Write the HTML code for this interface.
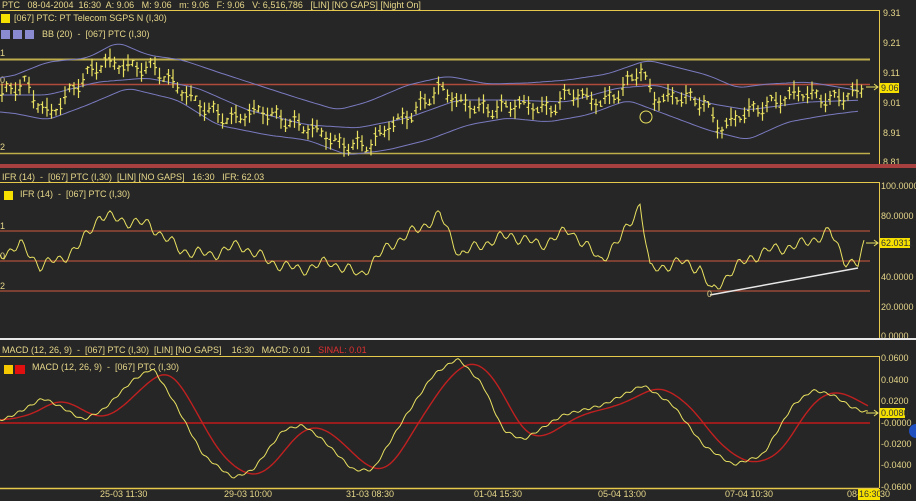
<!DOCTYPE html>
<html><head><meta charset="utf-8"><style>
html,body{margin:0;padding:0;background:#262626;width:916px;height:501px;overflow:hidden}
svg{display:block}
text{font-family:"Liberation Sans",sans-serif;font-size:9px;fill:#e6d78a;white-space:pre}
text.d{fill:#333}
</style></head><body>
<svg id="s" width="916" height="501" viewBox="0 0 916 501" xml:space="preserve">
<rect width="916" height="501" fill="#262626"/>
<text x="2" y="8">PTC   08-04-2004  16:30  A: 9.06   M: 9.06   m: 9.06   F: 9.06   V: 6,516,786   [LIN] [NO GAPS] [Night On]</text>
<line x1="0" y1="10.5" x2="879" y2="10.5" stroke="#e6c84a"/>
<line x1="879.5" y1="10" x2="879.5" y2="164" stroke="#e6c84a"/>
<rect x="1" y="14" width="9" height="9" fill="#f5e000"/>
<text x="14" y="21">[067] PTC: PT Telecom SGPS N (I,30)</text>
<rect x="1" y="30" width="9" height="9" fill="#8a8ad0"/><rect x="13" y="30" width="9" height="9" fill="#8a8ad0"/><rect x="25" y="30" width="9" height="9" fill="#8a8ad0"/>
<text x="42" y="37">BB (20)  -  [067] PTC (I,30)</text>
<text x="0" y="56">1</text><text x="0" y="150">2</text><text x="0" y="83">0</text>
<line x1="0" y1="59.5" x2="870" y2="59.5" stroke="#bfae4a" stroke-width="2"/>
<line x1="0" y1="153.5" x2="870" y2="153.5" stroke="#bfae4a" stroke-width="1.5"/>
<line x1="0" y1="84.5" x2="870" y2="84.5" stroke="#b04a3a" stroke-width="1.5"/>
<g id="bb" fill="none" stroke="#7a7ac0" stroke-width="1"></g>
<g id="bars" stroke="#e8e060" stroke-width="1.2" fill="none"></g>
<circle cx="646" cy="117" r="6" fill="none" stroke="#e8e060"/>
<g>
<text x="883" y="16">9.31</text><text x="883" y="46">9.21</text><text x="883" y="76">9.11</text>
<rect x="880" y="83" width="19" height="10" fill="#f5e000"/><text x="881" y="91" class="d">9.06</text>
<text x="883" y="106">9.01</text><text x="883" y="136">8.91</text><text x="883" y="165">8.81</text>
</g>
<path d="M866 87 L878 87 M874 84 L878 87 L874 90" stroke="#e8e060" fill="none"/>
<rect x="0" y="164" width="916" height="4" fill="#a84040"/>

<text x="2" y="180">IFR (14)  -  [067] PTC (I,30)  [LIN] [NO GAPS]   16:30   IFR: 62.03</text>
<line x1="0" y1="182.5" x2="879" y2="182.5" stroke="#e6c84a"/>
<line x1="879.5" y1="182" x2="879.5" y2="338" stroke="#e6c84a"/>
<rect x="4" y="191" width="9" height="9" fill="#f5e000"/>
<text x="20" y="197">IFR (14)  -  [067] PTC (I,30)</text>
<text x="0" y="229">1</text><text x="0" y="259">0</text><text x="0" y="289">2</text>
<line x1="0" y1="231" x2="870" y2="231" stroke="#b0503a" stroke-width="1.2"/>
<line x1="0" y1="261" x2="870" y2="261" stroke="#b0503a" stroke-width="1.2"/>
<line x1="0" y1="291" x2="870" y2="291" stroke="#b0503a" stroke-width="1.2"/>
<polyline id="ifr" fill="none" stroke="#e8e060" stroke-width="1"/>
<line x1="710" y1="295" x2="858" y2="268" stroke="#e8e8e8" stroke-width="1.5"/>
<text x="707" y="297" font-size="8">0</text>
<g>
<text x="881" y="189">100.0000</text><text x="881" y="219">80.0000</text>
<rect x="880" y="238" width="30" height="10" fill="#f5e000"/><text x="881" y="246" class="d">62.0311</text>
<text x="881" y="280">40.0000</text><text x="881" y="310">20.0000</text><text x="881" y="339">0.0000</text>
</g>
<path d="M866 243 L878 243 M874 240 L878 243 L874 246" stroke="#e8e060" fill="none"/>
<rect x="0" y="338" width="916" height="2" fill="#e8e8e8"/>

<text x="2" y="353">MACD (12, 26, 9)  -  [067] PTC (I,30)  [LIN] [NO GAPS]    16:30   MACD: 0.01   <tspan style="fill:#e03030">SINAL: 0.01</tspan></text>
<line x1="0" y1="356.5" x2="879" y2="356.5" stroke="#e6c84a"/>
<line x1="879.5" y1="356" x2="879.5" y2="488" stroke="#e6c84a"/>
<line x1="0" y1="488.5" x2="879" y2="488.5" stroke="#e6c84a" stroke-width="1.5"/>
<rect x="4" y="365" width="9" height="9" fill="#f5c800"/><rect x="15" y="365" width="10" height="9" fill="#e01010"/>
<text x="32" y="370">MACD (12, 26, 9)  -  [067] PTC (I,30)</text>
<line x1="0" y1="423" x2="870" y2="423" stroke="#c01818" stroke-width="1.5"/>
<polyline id="sig" fill="none" stroke="#c02020" stroke-width="1.4"/>
<polyline id="macd" fill="none" stroke="#e8e060" stroke-width="1"/>
<g>
<text x="881" y="361">0.0600</text><text x="881" y="383">0.0400</text><text x="881" y="404">0.0200</text>
<rect x="880" y="408" width="25" height="10" fill="#f5e000"/><text x="881" y="416" class="d">0.0080</text>
<text x="881" y="426">-0.0000</text><text x="881" y="447">-0.0200</text><text x="881" y="468">-0.0400</text><text x="881" y="490">-0.0600</text>
</g>
<path d="M866 413 L878 413 M874 410 L878 413 L874 416" stroke="#e8e060" fill="none"/>
<circle cx="916" cy="431" r="7" fill="#2050c0"/>
<g>
<text x="100" y="497">25-03 11:30</text><text x="224" y="497">29-03 10:00</text><text x="346" y="497">31-03 08:30</text>
<text x="474" y="497">01-04 15:30</text><text x="598" y="497">05-04 13:00</text><text x="725" y="497">07-04 10:30</text>
<text x="847" y="497">08-</text><rect x="858" y="489" width="22" height="11" fill="#f5e000"/><text x="859" y="497" class="d">16:30</text><text x="880" y="497">30</text>
</g>
</svg>
<script>
function interp(pts,x){for(var i=1;i<pts.length;i++){if(x<=pts[i][0]){var a=pts[i-1],b=pts[i];return a[1]+(b[1]-a[1])*(x-a[0])/(b[0]-a[0]);}}return pts[pts.length-1][1];}
var NS="http://www.w3.org/2000/svg";
function el(p,t,a){var e=document.createElementNS(NS,t);for(var k in a)e.setAttribute(k,a[k]);p.appendChild(e);return e;}
function smooth(arr,w){var o=[];for(var i=0;i<arr.length;i++){var s=0,n=0;for(var j=i-w;j<=i;j++){if(j>=0){s+=arr[j];n++;}}o.push(s/n);}return o;}
var price=[[0,95],[25,82],[35,100],[50,115],[70,92],[90,72],[105,62],[130,67],[155,68],[175,85],[200,105],[230,120],[260,110],[290,122],[320,132],[340,145],[370,145],[390,125],[410,115],[440,88],[460,103],[490,110],[520,104],[550,110],[570,92],[600,103],[620,92],[640,68],[655,100],[680,96],[705,103],[720,130],[740,115],[770,104],[800,92],[830,100],[858,92],[862,88]];
var up=[[0,78],[40,62],[80,58],[110,42],[140,55],[175,60],[210,72],[250,85],[290,98],[330,110],[360,102],[400,85],[440,76],[480,84],[520,83],[560,80],[600,74],[640,60],[700,75],[730,88],[760,84],[800,82],[860,92]];
var lo=[[0,112],[40,120],[80,105],[120,88],[170,100],[210,125],[260,135],[300,140],[340,155],[380,150],[420,140],[460,125],[500,118],[540,122],[580,115],[620,100],[660,115],[700,130],[740,140],[780,122],[820,115],[860,110]];
var mid=[[0,95],[40,95],[90,82],[140,78],[190,88],[240,110],[300,125],[350,128],[400,118],[450,100],[500,100],[560,102],[610,88],[650,85],[700,103],[740,110],[800,102],[860,100]];
var bb=document.getElementById('bb');
[up,lo,mid].forEach(function(p){var ys=[],xs=[];for(var x=0;x<=860;x+=3){xs.push(x);ys.push(interp(p,x));}ys=smooth(ys,5);el(bb,'polyline',{points:xs.map(function(x,i){return x+","+ys[i].toFixed(1)}).join(' ')});});
var bars=document.getElementById('bars'),d="";
for(var x=2;x<864;x+=4.5){var y=interp(price,x)+Math.sin(x*1.7)*5;var h=5+Math.abs(Math.sin(x*0.9))*14;d+="M"+x.toFixed(1)+" "+(y-h/2).toFixed(1)+"V"+(y+h/2).toFixed(1)+"M"+(x-2).toFixed(1)+" "+(y+Math.sin(x)*3).toFixed(1)+"h2M"+x.toFixed(1)+" "+(y-Math.cos(x)*3).toFixed(1)+"h2";}
el(bars,'path',{d:d});
var ifrB=[[0,255],[20,245],[40,265],[60,260],[80,245],[100,215],[120,220],[150,225],[180,250],[210,255],[240,245],[270,262],[300,270],[330,262],[360,275],[390,245],[420,228],[440,215],[460,255],[480,245],[510,235],[540,245],[570,230],[600,260],[620,240],[640,204],[650,270],[680,262],[700,268],[712,293],[730,272],[750,258],[770,250],[800,245],[830,232],[845,260],[858,265],[865,243]];
var p=[];for(var x=0;x<=865;x+=2){p.push(x+","+(interp(ifrB,x)+Math.sin(x*0.5)*4+Math.sin(x*0.21)*3).toFixed(1));}
document.getElementById('ifr').setAttribute('points',p.join(' '));
var mB=[[0,420],[20,410],[40,398],[60,408],[80,420],[100,410],[130,380],[150,368],[170,400],[200,455],[230,478],[250,470],[280,430],[300,425],[320,440],[350,470],[370,470],[400,420],[430,375],[455,358],[480,385],[500,430],[520,440],[560,415],[600,405],[640,385],[670,405],[700,445],[730,465],[760,455],[790,405],[810,390],[830,395],[850,408],[862,412]];
var xs=[],ys=[];for(var x=0;x<=868;x+=2){xs.push(x);ys.push(interp(mB,x));}
var ms=smooth(ys,3),sg=smooth(smooth(ys,12),8);
document.getElementById('macd').setAttribute('points',xs.map(function(x,i){return x+","+(ms[i]+Math.sin(x*0.6)*1.2).toFixed(1)}).join(' '));
document.getElementById('sig').setAttribute('points',xs.map(function(x,i){return x+","+sg[i].toFixed(1)}).join(' '));
</script>
</body></html>
